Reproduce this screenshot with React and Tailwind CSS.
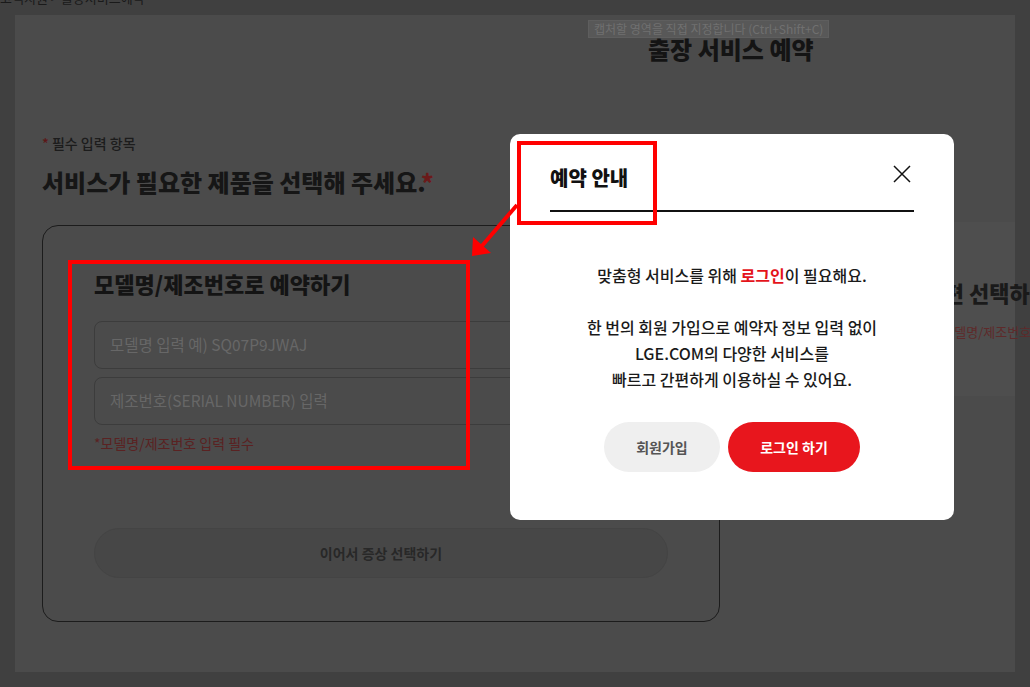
import React from "react";

function CloseIcon() {
    return (
        <svg width="18" height="18" viewBox="0 0 18 18" fill="none" stroke="#111" strokeWidth="1.5">
            <path d="M1 1L17 17M17 1L1 17" />
        </svg>
    );
}

function Arrow() {
    return (
        <svg className="absolute left-[460px] top-[195px]" width="65" height="70" viewBox="0 0 65 70">
            <line x1="57" y1="10" x2="21" y2="52" stroke="#ff0000" strokeWidth="4" />
            <polygon points="12,61 13,42 31,58" fill="#ff0000" />
        </svg>
    );
}

export default function App() {
    return (
        <div className="relative w-[1030px] h-[687px] overflow-hidden bg-[#404040] font-['Noto_Sans_CJK_KR','Noto_Sans',sans-serif]">
            {/* breadcrumb, mostly scrolled out of view */}
            <div className="h-[15px] overflow-hidden">
                <p className="-mt-[12px] text-[13px] leading-[20px] text-[#1a1a1a] whitespace-nowrap">고객지원 &gt; 출장서비스예약</p>
            </div>

            <main className="ml-[15px] w-[1000px] h-[657px] bg-[#4b4b4b]">
                <div className="pt-[18px] pl-[633px]">
                    <h1 className="text-[24px] leading-[32px] font-black text-[#141414]">출장 서비스 예약</h1>
                </div>

                <div className="px-[27px]">
                    <p className="mt-[68px] text-[14px] leading-[20px] font-medium text-[#1c1c1c]">
                        <span className="text-[#5c1717]">*</span> 필수 입력 항목
                    </p>
                    <h2 className="mt-[13px] text-[24px] leading-[32px] font-black text-[#161616]">
                        서비스가 필요한 제품을 선택해 주세요.<span className="text-[#6b1a1a]">*</span>
                    </h2>

                    <div className="mt-[27px] flex items-start gap-[24px]">
                        <div className="w-[678px] h-[397px] shrink-0 rounded-[16px] border-[1.5px] border-[#1c1c1c] bg-[#4b4b4b] px-[51px] pt-[42px]">
                            <h3 className="text-[22px] leading-[30px] font-black text-[#141414]">모델명/제조번호로 예약하기</h3>
                            <div className="mt-[23px] flex flex-col gap-[8px]">
                                <div className="h-[48px] rounded-[8px] border border-[#3c3c3c] px-[15px] flex items-center text-[15.5px] text-[#676767]">모델명 입력 예) SQ07P9JWAJ</div>
                                <div className="h-[48px] rounded-[8px] border border-[#3c3c3c] px-[15px] flex items-center text-[15.5px] text-[#676767]">제조번호(SERIAL NUMBER) 입력</div>
                            </div>
                            <p className="mt-[8px] text-[14px] leading-[20px] text-[#5a2222]">*모델명/제조번호 입력 필수</p>
                            <button className="mt-[75px] w-full h-[50px] rounded-full border border-[#444] bg-[#474747] text-[14px] font-bold text-[#282828]">이어서 증상 선택하기</button>
                        </div>

                        <div className="-mt-[3px] w-[271px] h-[174px] shrink-0 bg-[#4e4e4e] pl-[48px] pt-[55px] whitespace-nowrap">
                            <h3 className="text-[22px] leading-[30px] font-black text-[#1a1a1a]">제품 목록에서 간편 선택하여 예약하기</h3>
                            <p className="mt-[15px] ml-[13px] text-[13px] leading-[20px] text-[#5e2a2a]">*로그인 시 보유하신 제품 모델명/제조번호를 불러옵니다.</p>
                        </div>
                    </div>
                </div>
            </main>

            {/* screen capture tooltip */}
            <div className="absolute left-[588px] top-[20px] h-[18px] px-[5px] border border-[#5e5e5e] bg-[#585858] text-[12px] leading-[16px] text-[#707070] whitespace-nowrap">
                캡처할 영역을 직접 지정합니다 (Ctrl+Shift+C)
            </div>

            {/* modal */}
            <div className="absolute left-[510px] top-[134px] w-[444px] h-[386px] rounded-[10px] bg-white px-[40px] pt-[30px]">
                <div className="flex justify-between pb-[18px] border-b-2 border-[#111]">
                    <h2 className="text-[20px] leading-[28px] font-black text-[#111]">예약 안내</h2>
                    <button className="mt-[1px] mr-[3px] self-start" aria-label="닫기">
                        <CloseIcon />
                    </button>
                </div>
                <div className="pt-[50px] text-center text-[16px] leading-[26px] font-medium text-[#1a1a1a]">
                    <p>맞춤형 서비스를 위해 <span className="font-bold text-[#e4141b]">로그인</span>이 필요해요.</p>
                    <p className="mt-[26px]">
                        한 번의 회원 가입으로 예약자 정보 입력 없이<br />
                        LGE.COM의 다양한 서비스를<br />
                        빠르고 간편하게 이용하실 수 있어요.
                    </p>
                </div>
                <div className="mt-[30px] flex justify-center gap-[8px]">
                    <button className="w-[116px] h-[50px] rounded-full bg-[#efefef] text-[14px] font-bold text-[#555]">회원가입</button>
                    <button className="w-[132px] h-[50px] rounded-full bg-[#e8161d] text-[14px] font-bold text-white">로그인 하기</button>
                </div>
            </div>

            {/* red annotations */}
            <div className="absolute left-[68px] top-[260px] w-[402px] h-[210px] border-4 border-[#ff0000]" />
            <div className="absolute left-[517px] top-[141px] w-[140px] h-[84px] border-4 border-[#ff0000]" />
            <Arrow />
        </div>
    );
}
